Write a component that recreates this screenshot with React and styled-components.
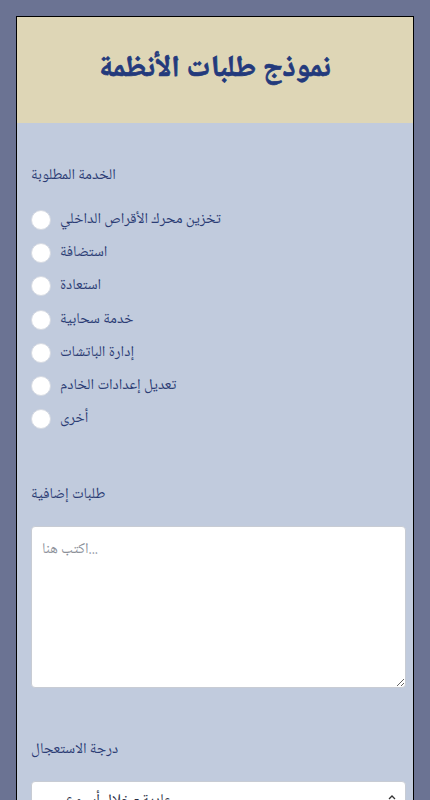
import styled, { createGlobalStyle } from 'styled-components';

const FONT = `'Noto Naskh Arabic', 'Liberation Sans', Arial, sans-serif`;

const GlobalStyle = createGlobalStyle`
  html, body {
    margin: 0;
    padding: 0;
    background: #6b7393;
  }
  body {
    font-family: ${FONT};
  }
`;

const Page = styled.div`
  padding: 16px 16px 0;
  min-height: 800px;
  box-sizing: border-box;
`;

const Card = styled.div`
  border: 1px solid #000;
  border-bottom: none;
  background: #c1cbdd;
  min-height: 784px;
`;

const Header = styled.div`
  height: 106px;
  background: #ded6b6;
  display: flex;
  align-items: center;
  justify-content: center;
`;

const Title = styled.h1`
  margin: 0;
  font-size: 30px;
  line-height: 40px;
  font-weight: bold;
  color: #233a7c;
  -webkit-text-stroke: 0.7px #233a7c;
`;

const Body = styled.div`
  padding: 0 8px 0 14px;
`;

const Section = styled.div`
  padding-top: ${p => p.$top}px;
`;

const Label = styled.div`
  font-size: 15px;
  line-height: 20px;
  color: #2b3c74;
  margin-bottom: ${p => p.$gap}px;
`;

const RadioList = styled.div`
  display: flex;
  flex-direction: column;
`;

const RadioRow = styled.label`
  display: flex;
  align-items: center;
  height: 33.3px;
  gap: 9px;
  font-size: 15px;
  color: #2b3c74;
`;

const Circle = styled.span`
  width: 20px;
  height: 20px;
  border-radius: 50%;
  background: #fff;
  border: 1px solid #d6dae2;
  box-sizing: border-box;
  flex-shrink: 0;
`;

const TextArea = styled.textarea`
  display: block;
  width: 375px;
  height: 162px;
  box-sizing: border-box;
  border: 1px solid #c8ccd4;
  border-radius: 4px;
  background: #fff;
  padding: 10px 10px;
  font-family: ${FONT};
  font-size: 15px;
  color: #333;
  outline: none;
  resize: vertical;

  &::placeholder {
    color: #8b9099;
  }
`;

const Select = styled.div`
  width: 375px;
  height: 40px;
  box-sizing: border-box;
  border: 1px solid #c8ccd4;
  border-radius: 4px;
  background: #fff;
  display: flex;
  align-items: center;
  justify-content: space-between;
  padding: 0 8px 0 34px;
  font-size: 15px;
  color: #2a2f45;
`;

const Chevron = styled.svg`
  width: 10px;
  height: 14px;
`;

const services = [
  'تخزين محرك الأقراص الداخلي',
  'استضافة',
  'استعادة',
  'خدمة سحابية',
  'إدارة الباتشات',
  'تعديل إعدادات الخادم',
  'أخرى',
];

export default function App() {
  return (
    <>
      <GlobalStyle />
      <Page>
        <Card>
          <Header>
            <Title>نموذج طلبات الأنظمة</Title>
          </Header>
          <Body>
            <Section $top={43}>
              <Label $gap={17}>الخدمة المطلوبة</Label>
              <RadioList>
                {services.map(s => (
                  <RadioRow key={s}>
                    <Circle />
                    {s}
                  </RadioRow>
                ))}
              </RadioList>
            </Section>
            <Section $top={49}>
              <Label $gap={21}>طلبات إضافية</Label>
              <TextArea placeholder="اكتب هنا..." />
            </Section>
            <Section $top={52}>
              <Label $gap={21}>درجة الاستعجال</Label>
              <Select>
                <span>عادية - خلال أسبوع</span>
                <Chevron viewBox="0 0 10 14">
                  <path d="M2 5l3-3 3 3M2 9l3 3 3-3" fill="none" stroke="#333" strokeWidth="1.3" />
                </Chevron>
              </Select>
            </Section>
          </Body>
        </Card>
      </Page>
    </>
  );
}
